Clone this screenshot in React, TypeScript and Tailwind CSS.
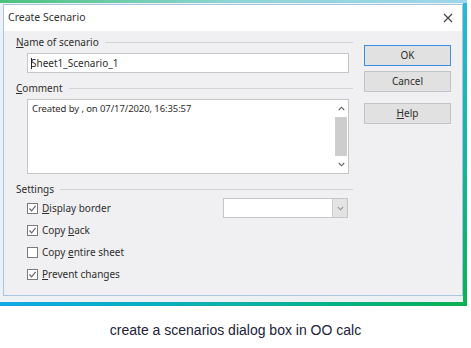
import React from 'react';

const Check: React.FC<{ checked: boolean }> = ({ checked }) => (
  <div className="w-[11px] h-[11px] border border-[#7a7a7a] bg-white flex items-center justify-center shrink-0">
    {checked && (
      <svg width="9" height="9" viewBox="0 0 9 9">
        <path d="M1.5 4.5 L3.6 6.8 L7.6 1.8" fill="none" stroke="#666" strokeWidth="1.2" />
      </svg>
    )}
  </div>
);

const SectionLabel: React.FC<{ children: React.ReactNode; className?: string }> = ({ children, className }) => (
  <div className={`flex items-center h-[14px] gap-[6px] ${className ?? ''}`}>
    <span className="whitespace-nowrap">{children}</span>
    <div className="flex-1 h-px bg-[#d3d3d5]" />
  </div>
);

const Option: React.FC<{ checked: boolean; children: React.ReactNode }> = ({ checked, children }) => (
  <div className="flex items-center gap-[4px]">
    <Check checked={checked} />
    <span>{children}</span>
  </div>
);

const Button: React.FC<{ children: React.ReactNode; focused?: boolean; className?: string }> = ({
  children,
  focused,
  className,
}) => (
  <div
    className={`h-[21px] flex items-center justify-center bg-[#e1e1e1] border ${
      focused ? 'border-[#3c8fe0]' : 'border-[#c4c4c4]'
    } ${className ?? ''}`}
  >
    {children}
  </div>
);

const Chevron: React.FC<{ up?: boolean; color?: string }> = ({ up, color = '#606060' }) => (
  <svg width="7" height="5" viewBox="0 0 7 5">
    <path d={up ? 'M0.8 4 L3.5 1.2 L6.2 4' : 'M0.8 1 L3.5 3.8 L6.2 1'} fill="none" stroke={color} strokeWidth="1.1" />
  </svg>
);

export default function App() {
  return (
    <div className="w-[471px] h-[348px] bg-white overflow-hidden">
      {/* Screenshot */}
      <div className="w-[467px] h-[307px] flex flex-col">
        <div className="h-[3px] bg-gradient-to-r from-[#49c27a] via-[#8fd4d6] to-[#9fd6ea]" />
        <div className="flex h-[299px]">
          <div className="flex-1 bg-[#eef1f4] pl-[3px] pt-[1px]">
            <div
              className="w-[460px] h-[292px] border border-[#a8c5e2] bg-[#f0f0f2] flex flex-col text-[10px] text-[#2e2e2e]"
              style={{ fontFamily: '"Segoe UI", "Noto Sans", sans-serif' }}
            >
              {/* Title bar */}
              <div className="h-[26px] bg-white flex items-center justify-between pl-[4px] pr-[9px]">
                <span className="text-[10.5px] text-[#333]">Create Scenario</span>
                <svg width="10" height="10" viewBox="0 0 10 10">
                  <path d="M1 1 L9 9 M9 1 L1 9" stroke="#444" strokeWidth="1.2" />
                </svg>
              </div>

              {/* Body */}
              <div className="flex flex-1 pl-[12px] pt-[4px]">
                <div className="w-[337px] flex flex-col">
                  <SectionLabel>
                    <span className="underline">N</span>ame of scenario
                  </SectionLabel>
                  <div className="mt-[4px] ml-[11px] w-[322px] h-[20px] border border-[#c6c6c6] bg-white flex items-center pl-[3px]">
                    <span className="w-px h-[11px] bg-[#222] mr-[-1px]" />
                    Sheet1_Scenario_1
                  </div>

                  <SectionLabel className="mt-[8px]">
                    <span className="underline">C</span>omment
                  </SectionLabel>
                  <div className="mt-[4px] ml-[11px] w-[322px] h-[75px] border border-[#c6c6c6] bg-white flex">
                    <div className="flex-1 pl-[4px] pt-[2px] text-[9.5px] tracking-[-0.1px]">
                      Created by , on 07/17/2020, 16:35:57
                    </div>
                    <div className="w-[14px] flex flex-col items-center">
                      <div className="h-[17px] flex items-center justify-center">
                        <Chevron up />
                      </div>
                      <div className="flex-1 w-[12px] bg-[#cdcdcd]" />
                      <div className="h-[17px] flex items-center justify-center">
                        <Chevron />
                      </div>
                    </div>
                  </div>

                  <SectionLabel className="mt-[8px]">Settings</SectionLabel>
                  <div className="mt-[1px] pl-[11px] flex flex-col">
                    <div className="h-[22px] flex items-center">
                      <Option checked>
                        <span className="underline">D</span>isplay border
                      </Option>
                      <div className="ml-auto mr-[5px] w-[125px] h-[20px] border border-[#c6c6c6] bg-white flex">
                        <div className="flex-1" />
                        <div className="w-[15px] bg-[#e3e3e3] border-l border-[#cfcfcf] flex items-center justify-center">
                          <Chevron color="#999" />
                        </div>
                      </div>
                    </div>
                    <div className="h-[22px] flex items-center">
                      <Option checked>
                        Copy <span className="underline">b</span>ack
                      </Option>
                    </div>
                    <div className="h-[22px] flex items-center">
                      <Option checked={false}>
                        Copy <span className="underline">e</span>ntire sheet
                      </Option>
                    </div>
                    <div className="h-[22px] flex items-center">
                      <Option checked>
                        <span className="underline">P</span>revent changes
                      </Option>
                    </div>
                  </div>
                </div>

                {/* Buttons */}
                <div className="ml-[11px] w-[87px] pt-[10px] flex flex-col">
                  <Button focused>OK</Button>
                  <Button className="mt-[5px]">Cancel</Button>
                  <Button className="mt-[11px]">
                    <span>
                      <span className="underline">H</span>elp
                    </span>
                  </Button>
                </div>
              </div>
            </div>
          </div>
          <div className="w-[4px] bg-gradient-to-b from-[#2cb6dc] to-[#0db250]" />
        </div>
        <div className="h-[4px] bg-gradient-to-r from-[#12a8e6] via-[#0fb0a8] to-[#0bb04f]" />
      </div>

      {/* Caption */}
      <div
        className="mt-[15px] text-center text-[14px] leading-[16px] text-[#22223a]"
        style={{ fontFamily: '"Liberation Sans", Arial, sans-serif' }}
      >
        create a scenarios dialog box in OO calc
      </div>
    </div>
  );
}
